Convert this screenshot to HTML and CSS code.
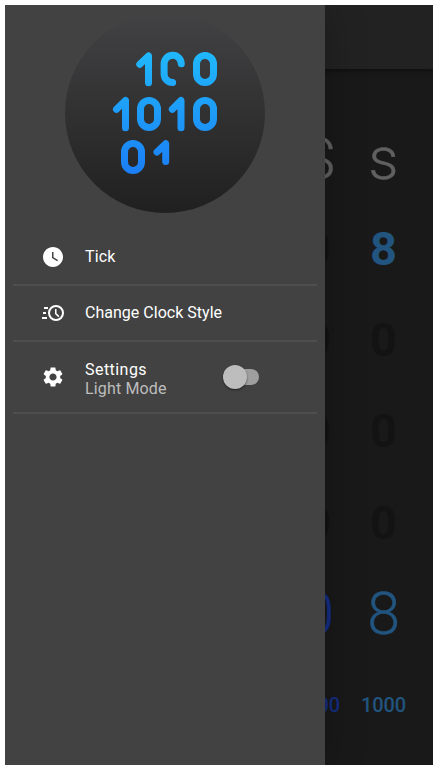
FILE: index.html
```html
<!DOCTYPE html>
<html lang="en">
<head>
<meta charset="utf-8">
<title>Binary Clock</title>
<link rel="stylesheet" href="styles.css">
</head>
<body>
<div class="screen">
  <header class="appbar"></header>
  <main class="clock">
    <div class="column tens">
      <span class="unit">S</span>
      <span class="bit">0</span>
      <span class="bit">0</span>
      <span class="bit">0</span>
      <span class="bit">0</span>
      <span class="digit">0</span>
      <span class="code">0000</span>
    </div>
    <div class="column ones">
      <span class="unit">s</span>
      <span class="bit on">8</span>
      <span class="bit">0</span>
      <span class="bit">0</span>
      <span class="bit">0</span>
      <span class="digit">8</span>
      <span class="code">1000</span>
    </div>
  </main>
  <aside class="drawer">
    <svg class="logo" viewBox="65 13 200 200" aria-hidden="true">
      <defs>
        <linearGradient id="disc" x1="0" y1="13" x2="0" y2="213" gradientUnits="userSpaceOnUse">
          <stop offset="0" stop-color="#424244"/><stop offset="1" stop-color="#202020"/>
        </linearGradient>
        <linearGradient id="blue" x1="0" y1="52" x2="0" y2="174" gradientUnits="userSpaceOnUse">
          <stop offset="0" stop-color="#20b8fb"/><stop offset="1" stop-color="#1b7ef5"/>
        </linearGradient>
      </defs>
      <circle cx="165" cy="113" r="100" fill="url(#disc)"/>
      <g fill="none" stroke="url(#blue)" stroke-width="7" stroke-linecap="round" stroke-linejoin="round">
        <path d="M139.8 64.3 148.5 56V82.7M181.3 63.7A8.6 8.6 0 0 0 164.1 64V74A8.5 8.5 0 0 0 172.6 82.5"/>
        <rect x="196.5" y="55.5" width="17" height="27" rx="8.5"/>
        <path d="M116.5 109.3 125.5 100.5V127.7M172.3 109.3 181 100.5V127.7"/>
        <rect x="140.5" y="100.5" width="17" height="27" rx="8.5"/>
        <rect x="196.5" y="100.5" width="17" height="27" rx="8.5"/>
        <rect x="124.5" y="143.5" width="17" height="27" rx="8.5"/>
        <path d="M157 152 165.7 143.7V161.5"/>
      </g>
    </svg>
    <nav class="menu">
      <div class="item">
        <svg class="icon" viewBox="0 0 24 24"><path d="M12 2C6.5 2 2 6.5 2 12s4.5 10 10 10 10-4.5 10-10S17.5 2 12 2zm4.2 14.2L11 13V7h1.5v5.2l4.5 2.7-.8 1.3z"/></svg>
        <span class="label">Tick</span>
      </div>
      <hr class="divider">
      <div class="item">
        <svg class="icon" viewBox="0 0 24 24"><path d="M15 4a8 8 0 1 0 0 16 8 8 0 0 0 0-16zm0 14a6 6 0 1 1 0-12 6 6 0 0 1 0 12z"/><path d="M15.5 8H14v5l3.3 3.2 1.1-1.1-2.9-2.8zM3 6h4v2H3zM2 11h3v2H2zM1 16h5v2H1z"/></svg>
        <span class="label tight">Change Clock Style</span>
      </div>
      <hr class="divider">
      <div class="item tall">
        <svg class="icon" viewBox="0 0 24 24"><path d="M19.14 12.94c.04-.3.06-.61.06-.94 0-.32-.02-.64-.07-.94l2.03-1.58c.18-.14.23-.41.12-.61l-1.92-3.32c-.12-.22-.37-.29-.59-.22l-2.39.96c-.5-.38-1.03-.7-1.62-.94l-.36-2.54c-.04-.24-.24-.41-.48-.41h-3.84c-.24 0-.43.17-.47.41l-.36 2.54c-.59.24-1.13.57-1.62.94l-2.39-.96c-.22-.08-.47 0-.59.22L2.74 8.87c-.12.21-.08.47.12.61l2.03 1.58c-.05.3-.09.63-.09.94s.02.64.07.94l-2.03 1.58c-.18.14-.23.41-.12.61l1.92 3.32c.12.22.37.29.59.22l2.39-.96c.5.38 1.03.7 1.62.94l.36 2.54c.05.24.24.41.48.41h3.84c.24 0 .44-.17.47-.41l.36-2.54c.59-.24 1.13-.56 1.62-.94l2.39.96c.22.08.47 0 .59-.22l1.92-3.32c.12-.22.07-.47-.12-.61l-2.01-1.58zM12 15.6c-1.98 0-3.6-1.62-3.6-3.6s1.62-3.6 3.6-3.6 3.6 1.62 3.6 3.6-1.62 3.6-3.6 3.6z"/></svg>
        <div class="label two-line"><span class="main">Settings</span><span class="sub">Light Mode</span></div>
        <div class="switch"><div class="thumb"></div></div>
      </div>
      <hr class="divider">
    </nav>
  </aside>
</div>
</body>
</html>
```
FILE: styles.css
```css
* { box-sizing: border-box; }
body {
  margin: 0;
  padding: 5px;
  background: #fff;
  font-family: Roboto, "Liberation Sans", sans-serif;
}
.screen {
  position: relative;
  width: 428px;
  height: 760px;
  overflow: hidden;
  background: #191919;
}
.appbar {
  height: 64px;
  background: #222;
  box-shadow: 0 2px 5px rgba(0, 0, 0, .4);
}
.clock {
  display: flex;
  justify-content: flex-end;
  height: 682px;
  padding: 42px 16.5px 0 0;
}
.column {
  display: grid;
  grid-template-rows: repeat(7, 91.4px);
  place-items: center;
  width: 66px;
  line-height: 1;
}
.unit { padding-top: 4px; font-size: 59px; font-weight: 300; color: #606060; -webkit-text-stroke: .4px; }
.bit { font-size: 47px; font-weight: 700; color: #131313; }
.bit.on { color: #21547e; }
.digit { font-size: 59px; font-weight: 300; -webkit-text-stroke: .4px; }
.code { font-size: 20px; font-weight: 500; letter-spacing: -.1px; }
.tens .digit, .tens .code { color: #142d82; }
.ones .digit, .ones .code { color: #21547e; }
.drawer {
  position: absolute;
  top: 0;
  left: 0;
  width: 320px;
  height: 760px;
  padding-top: 8px;
  background: #424242;
  box-shadow: 0 0 40px rgba(0, 0, 0, .24);
}
.logo {
  display: block;
  width: 200px;
  height: 200px;
  margin: 0 auto 16px;
}
.item {
  display: flex;
  align-items: center;
  height: 56px;
  padding-left: 36px;
}
.tall { height: 72px; }
.icon { width: 24px; height: 24px; fill: #fff; }
.label {
  width: 138px;
  margin-left: 20px;
  padding-bottom: 2px;
  font-size: 16px;
  line-height: 19px;
  letter-spacing: .15px;
  white-space: nowrap;
  color: #fff;
}
.tight { letter-spacing: .02px; }
.two-line { display: grid; padding: 3px 0 0; }
.main { letter-spacing: .45px; }
.sub { color: #bdbdbd; }
.divider {
  height: 2px;
  margin: -1px 8px;
  border: 0;
  background: #4e4e4e;
}
.switch {
  display: flex;
  align-items: center;
  width: 32px;
  height: 16px;
  margin-left: 4px;
  border-radius: 8px;
  background: #9f9f9f;
}
.thumb {
  flex: none;
  width: 24px;
  height: 24px;
  margin-left: -4px;
  border-radius: 50%;
  background: #bdbdbd;
  box-shadow: 0 1px 2px rgba(0, 0, 0, .55);
}
```
